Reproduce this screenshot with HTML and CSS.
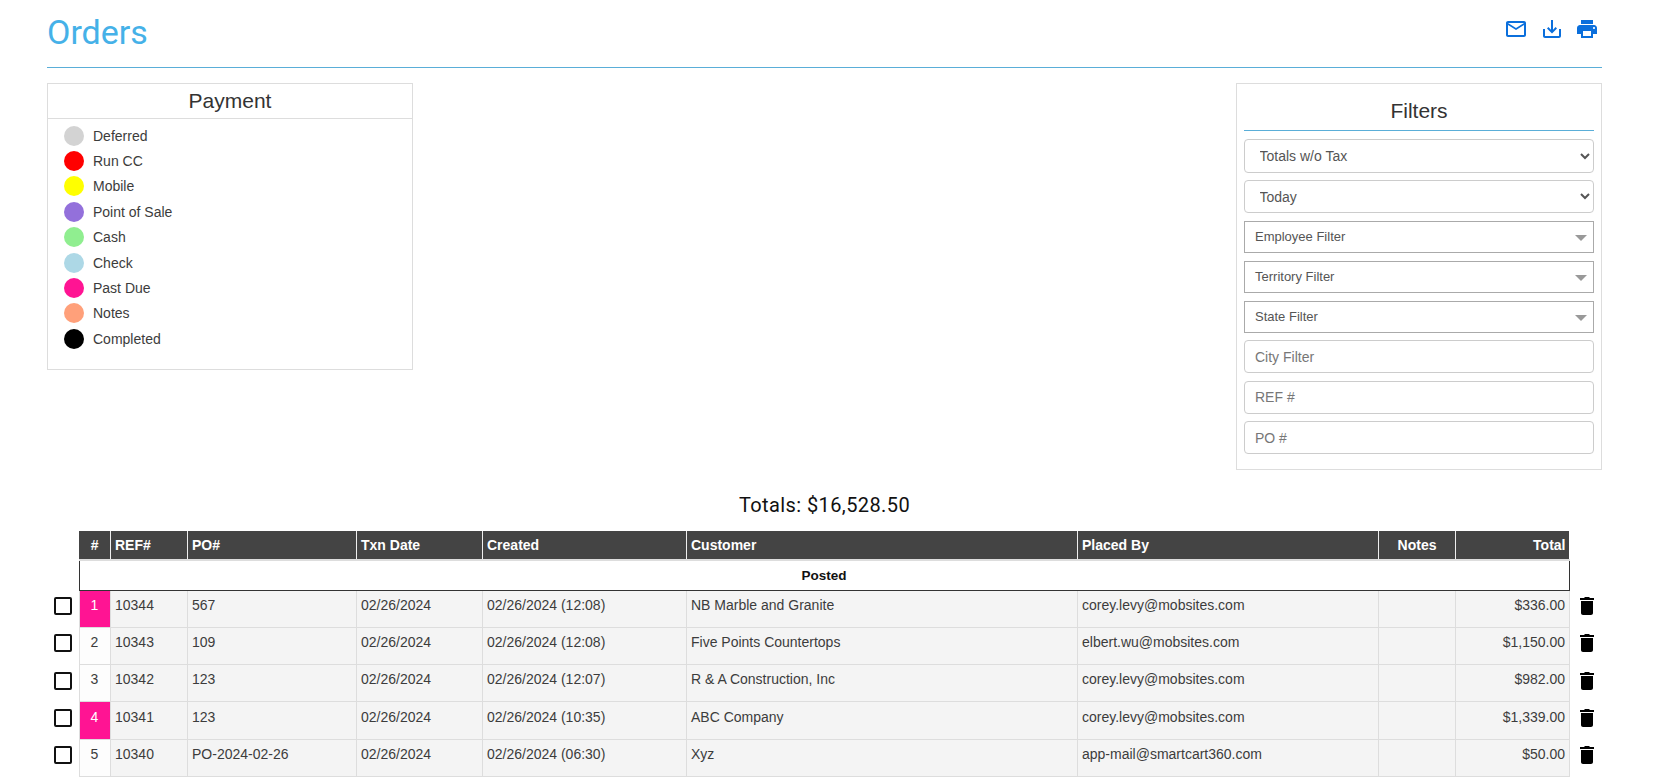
FILE: index.html

```html
<!DOCTYPE html>
<html lang="en">
<head>
  <meta charset="UTF-8">
  <title>Orders</title>
  <link rel="stylesheet" href="styles.css">
</head>
<body>

<div class="page">
  <div class="page-header">
    <h1>Orders</h1>
    <div class="page-actions">
      <svg viewBox="0 0 24 24" class="action-icon"><path d="M22 6c0-1.100-.9-2-2-2H4c-1.100 0-2 .9-2 2v12c0 1.100.9 2 2 2h16c1.100 0 2-.9 2-2V6zm-2 0-8 5-8-5h16zm0 12H4V8l8 5 8-5v10z"/></svg>
      <svg viewBox="0 0 24 24" class="action-icon"><path d="M19 12v7H5v-7H3v7c0 1.100.9 2 2 2h14c1.100 0 2-.9 2-2v-7h-2zm-6 .67 2.590-2.580L17 11.500l-5 5-5-5 1.410-1.410L11 12.670V3h2z"/></svg>
      <svg viewBox="0 0 24 24" class="action-icon"><path d="M19 8H5c-1.660 0-3 1.340-3 3v6h4v4h12v-4h4v-6c0-1.660-1.340-3-3-3zm-3 11H8v-5h8v5zm3-7c-.55 0-1-.45-1-1s.45-1 1-1 1 .45 1 1-.45 1-1 1zm-1-9H6v4h12V3z"/></svg>
    </div>
  </div>

  <div class="top-row">
    <div class="legend">
      <div class="legend-title">Payment</div>
      <ul class="legend-list">
        <li><span class="dot dot-deferred"></span>Deferred</li>
        <li><span class="dot dot-run"></span>Run CC</li>
        <li><span class="dot dot-mobile"></span>Mobile</li>
        <li><span class="dot dot-pos"></span>Point of Sale</li>
        <li><span class="dot dot-cash"></span>Cash</li>
        <li><span class="dot dot-check"></span>Check</li>
        <li><span class="dot dot-due"></span>Past Due</li>
        <li><span class="dot dot-notes"></span>Notes</li>
        <li><span class="dot dot-done"></span>Completed</li>
      </ul>
    </div>

    <div class="filters">
      <div class="filters-title">Filters</div>
      <select class="field field-tall"><option>Totals w/o Tax</option></select>
      <select class="field"><option>Today</option></select>
      <div class="combo">Employee Filter</div>
      <div class="combo">Territory Filter</div>
      <div class="combo combo-last">State Filter</div>
      <input class="field" type="text" placeholder="City Filter">
      <input class="field" type="text" placeholder="REF #">
      <input class="field" type="text" placeholder="PO #">
    </div>
  </div>

  <div class="totals">Totals: $16,528.50</div>

  <table class="orders">
    <colgroup>
      <col class="c-check"><col class="c-num"><col class="c-ref"><col class="c-po"><col class="c-txn"><col class="c-created"><col class="c-customer"><col class="c-placed"><col class="c-notes"><col class="c-total"><col class="c-del">
    </colgroup>
    <thead>
      <tr>
        <td class="side"></td>
        <th class="num">#</th><th>REF#</th><th>PO#</th><th>Txn Date</th><th>Created</th><th>Customer</th><th>Placed By</th><th class="right notes-head">Notes</th><th class="right">Total</th>
        <td class="side"></td>
      </tr>
    </thead>
    <tbody>
      <tr class="group">
        <td class="side"></td>
        <td class="group-cell" colspan="9">Posted</td>
        <td class="side"></td>
      </tr>
      <tr>
        <td class="side"><span class="check"></span></td>
        <td class="num due">1</td><td>10344</td><td>567</td><td>02/26/2024</td><td>02/26/2024 (12:08)</td><td>NB Marble and Granite</td><td>corey.levy@mobsites.com</td><td></td><td class="right">$336.00</td>
        <td class="side"><svg viewBox="0 0 14 18" class="trash"><path d="M5 0h4l1 1h4v2H0V1h4zM1 4h12v12c0 1.100-.9 2-2 2H3c-1.100 0-2-.9-2-2z"/></svg></td>
      </tr>
      <tr>
        <td class="side"><span class="check"></span></td>
        <td class="num">2</td><td>10343</td><td>109</td><td>02/26/2024</td><td>02/26/2024 (12:08)</td><td>Five Points Countertops</td><td>elbert.wu@mobsites.com</td><td></td><td class="right">$1,150.00</td>
        <td class="side"><svg viewBox="0 0 14 18" class="trash"><path d="M5 0h4l1 1h4v2H0V1h4zM1 4h12v12c0 1.100-.9 2-2 2H3c-1.100 0-2-.9-2-2z"/></svg></td>
      </tr>
      <tr>
        <td class="side"><span class="check"></span></td>
        <td class="num">3</td><td>10342</td><td>123</td><td>02/26/2024</td><td>02/26/2024 (12:07)</td><td>R &amp; A Construction, Inc</td><td>corey.levy@mobsites.com</td><td></td><td class="right">$982.00</td>
        <td class="side"><svg viewBox="0 0 14 18" class="trash"><path d="M5 0h4l1 1h4v2H0V1h4zM1 4h12v12c0 1.100-.9 2-2 2H3c-1.100 0-2-.9-2-2z"/></svg></td>
      </tr>
      <tr>
        <td class="side"><span class="check"></span></td>
        <td class="num due">4</td><td>10341</td><td>123</td><td>02/26/2024</td><td>02/26/2024 (10:35)</td><td>ABC Company</td><td>corey.levy@mobsites.com</td><td></td><td class="right">$1,339.00</td>
        <td class="side"><svg viewBox="0 0 14 18" class="trash"><path d="M5 0h4l1 1h4v2H0V1h4zM1 4h12v12c0 1.100-.9 2-2 2H3c-1.100 0-2-.9-2-2z"/></svg></td>
      </tr>
      <tr>
        <td class="side"><span class="check"></span></td>
        <td class="num">5</td><td>10340</td><td>PO-2024-02-26</td><td>02/26/2024</td><td>02/26/2024 (06:30)</td><td>Xyz</td><td>app-mail@smartcart360.com</td><td></td><td class="right">$50.00</td>
        <td class="side"><svg viewBox="0 0 14 18" class="trash"><path d="M5 0h4l1 1h4v2H0V1h4zM1 4h12v12c0 1.100-.9 2-2 2H3c-1.100 0-2-.9-2-2z"/></svg></td>
      </tr>
    </tbody>
  </table>
</div>

</body>
</html>
```

FILE: styles.css

```css
body {
  margin: 0;
  font-family: "Liberation Sans", Arial, sans-serif;
  font-size: 14px;
  color: #3c3c3c;
  background-color: #fff;
}
.page {
  padding: 0 55px 0 47px;
}
.page-header {
  display: flex;
  justify-content: space-between;
  align-items: flex-start;
  height: 67px;
  border-bottom: 1px solid #5aaed8;
}
h1 {
  margin: 12px 0 0;
  font-family: Roboto, sans-serif;
  font-size: 34px;
  font-weight: 400;
  line-height: 40px;
  color: #45b1e8;
}
.page-actions {
  display: flex;
  gap: 11.5px;
  margin: 17px 3px 0 0;
}
.action-icon {
  width: 24px;
  height: 24px;
  fill: #0b6fdc;
}
.top-row {
  display: flex;
  justify-content: space-between;
  align-items: flex-start;
  margin-top: 15px;
}
.legend {
  width: 366px;
  height: 287px;
  box-sizing: border-box;
  border: 1px solid #ddd;
}
.legend-title {
  height: 35px;
  box-sizing: border-box;
  border-bottom: 1px solid #ddd;
  text-align: center;
  font-size: 21px;
  line-height: 34px;
  color: #333;
}
.legend-list {
  list-style-type: none;
  margin: 4px 0 0;
  padding: 0 0 0 16px;
}
.legend-list li {
  display: flex;
  align-items: center;
  gap: 9px;
  height: 25.4px;
}
.dot {
  width: 20px;
  height: 20px;
  border-radius: 50%;
}
.dot-deferred { background-color: #d3d3d3; }
.dot-run { background-color: #ff0000; }
.dot-mobile { background-color: #ffff00; }
.dot-pos { background-color: #9370db; }
.dot-cash { background-color: #90ee90; }
.dot-check { background-color: #add8e6; }
.dot-due { background-color: #ff1493; }
.dot-notes { background-color: #ffa07a; }
.dot-done { background-color: #000; }
.filters {
  width: 366px;
  height: 387px;
  box-sizing: border-box;
  border: 1px solid #ddd;
  padding: 0 7px;
}
.filters-title {
  height: 47px;
  box-sizing: border-box;
  border-bottom: 1px solid #5aaed8;
  margin-bottom: 8px;
  text-align: center;
  font-size: 21px;
  line-height: 53px;
  color: #333;
}
.field {
  display: block;
  width: 100%;
  height: 33px;
  box-sizing: border-box;
  margin-bottom: 7.5px;
  padding: 0 10px;
  background-color: #fff;
  border: 1px solid #ccc;
  border-radius: 4px;
  font-family: inherit;
  font-size: 14px;
  color: #555;
  outline: none;
}
select.field {
  padding-left: 10.5px;
  margin-bottom: 8px;
}
select.field-tall {
  height: 34px;
  margin-bottom: 7px;
}
.field::placeholder {
  color: #777;
}
.combo {
  position: relative;
  height: 32px;
  box-sizing: border-box;
  margin-bottom: 8px;
  padding-left: 10px;
  border: 1px solid #aaa;
  font-size: 13px;
  line-height: 30px;
  color: #555;
}
.combo-last {
  margin-bottom: 7px;
}
.combo::after {
  content: "";
  position: absolute;
  top: 13px;
  right: 6px;
  border-top: 6px solid #999;
  border-left: 6px solid transparent;
  border-right: 6px solid transparent;
}
.totals {
  margin-top: 23px;
  text-align: center;
  font-family: Roboto, sans-serif;
  font-size: 20px;
  font-weight: 400;
  letter-spacing: .4px;
  line-height: 24px;
  color: #111;
}
.orders {
  width: 1547px;
  margin: 14px 0 0 -8px;
  table-layout: fixed;
  border-collapse: collapse;
  font-size: 14px;
}
.c-check { width: 40px; }
.c-num { width: 31px; }
.c-ref { width: 77px; }
.c-po { width: 169px; }
.c-txn { width: 126px; }
.c-created { width: 204px; }
.c-customer { width: 391px; }
.c-placed { width: 301px; }
.c-notes { width: 77px; }
.c-total { width: 114px; }
.c-del { width: 17px; }
.orders th {
  height: 28px;
  padding: 0 3.5px 0 4.5px;
  background-color: #444;
  border-left: 1px solid #eee;
  text-align: left;
  font-weight: bold;
  color: #fff;
}
.orders td {
  height: 37.3px;
  box-sizing: border-box;
  padding: 0 3.5px 8px 4.5px;
  background-color: #f4f4f4;
  border: 1px solid #ddd;
}
.orders th.right,
.orders td.right {
  text-align: right;
}
.orders th.notes-head {
  padding-right: 18px;
}
.orders th.num {
  text-align: center;
  border-left: none;
}
.orders td.num {
  padding-left: 0;
  padding-right: 0;
  text-align: center;
  background-color: #fdfdfd;
}
.orders td.due {
  background-color: #ff1493;
  color: #fff;
}
.orders td.side {
  padding: 0 0 5px;
  background-color: #fff;
  border: none;
}
.orders thead td.side,
.orders .group td.side {
  height: 28px;
}
.orders td.group-cell {
  height: 30px;
  padding: 0;
  background-color: #fff;
  border: 1px solid #333;
  border-top: 2px solid #ddd;
  text-align: center;
  font-size: 13.5px;
  font-weight: bold;
  color: #111;
}
.check {
  display: block;
  width: 18px;
  height: 18px;
  box-sizing: border-box;
  margin-left: 15px;
  border: 2px solid #111;
  border-radius: 2px;
}
.trash {
  display: block;
  width: 14px;
  height: 18px;
  margin-left: 10px;
  fill: #000;
}
```
